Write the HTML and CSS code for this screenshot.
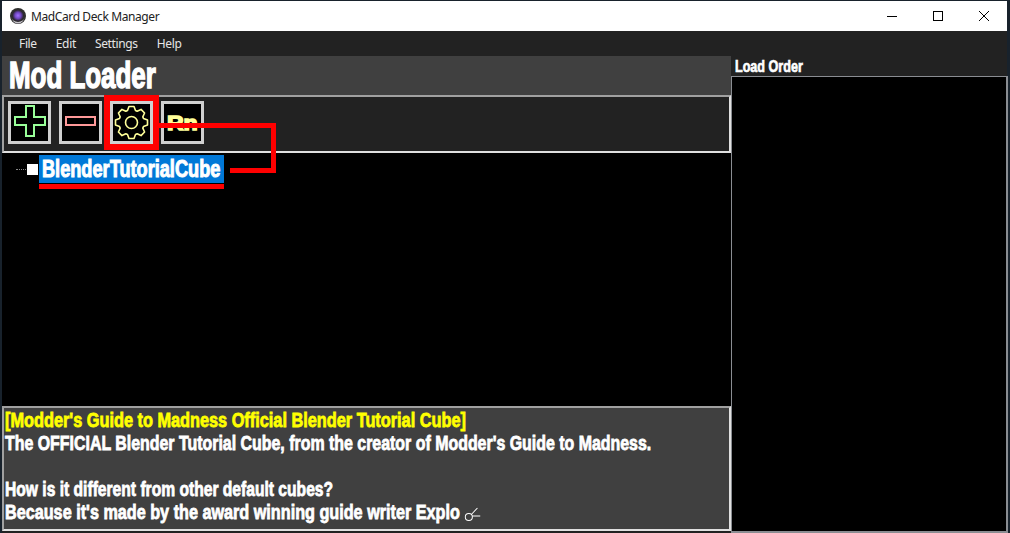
FILE: index.html
```html
<!DOCTYPE html>
<html lang="en">
<head>
  <meta charset="UTF-8">
  <title>MadCard Deck Manager</title>
  <link rel="stylesheet" href="styles.css">
</head>
<body>
  <div class="window">
    <!-- Title bar -->
    <div class="titlebar">
      <svg class="app-icon" width="16" height="16" viewBox="0 0 16 16">
        <defs>
          <radialGradient id="glow">
            <stop offset="0" stop-color="#a070ff"/>
            <stop offset="0.55" stop-color="#7048c0"/>
            <stop offset="1" stop-color="#2a2430"/>
          </radialGradient>
        </defs>
        <circle cx="8" cy="8" r="8" fill="#2e2e2e"/>
        <path d="M1.500 9a6.500 6.500 0 0 0 13 0 6.500 5 0 0 1-13 0z" fill="#c8c4cc"/>
        <circle cx="8" cy="7.500" r="5.500" fill="url(#glow)"/>
      </svg>
      <span class="app-title">MadCard Deck Manager</span>
      <div class="win-buttons">
        <svg width="46" height="30" viewBox="0 0 46 30"><path d="M18 15.500h10" stroke="#000" fill="none"/></svg>
        <svg width="46" height="30" viewBox="0 0 46 30"><rect x="18.500" y="10.500" width="9" height="9" stroke="#000" fill="none"/></svg>
        <svg width="46" height="30" viewBox="0 0 46 30"><path d="M18 10l10 10M28 10 18 20" stroke="#000" fill="none"/></svg>
      </div>
    </div>

    <!-- Menu -->
    <div class="menubar">
      <span>File</span>
      <span>Edit</span>
      <span>Settings</span>
      <span>Help</span>
    </div>

    <div class="main">
      <div class="left">
        <div class="header"><h1>Mod Loader</h1></div>

        <div class="toolbar">
          <button class="tool">
            <svg width="37" height="37" viewBox="0 0 37 37" shape-rendering="crispEdges"><path d="M15 2h8v11h11v8H23v11h-8V21H4v-8h11z" fill="none" stroke="#9f9" stroke-width="2"/></svg>
          </button>
          <button class="tool">
            <svg width="37" height="37" viewBox="0 0 37 37" shape-rendering="crispEdges"><rect x="4" y="13" width="29" height="8" fill="none" stroke="#f99" stroke-width="2"/></svg>
          </button>
          <button class="tool">
            <svg width="37" height="37" viewBox="-18.500 -18.500 37 37">
              <polygon points="-4,-12 -2.500,-16 2.500,-16 4,-12 5.660,-11.310 9.540,-13.080 13.080,-9.540 11.310,-5.660 12,-4 16,-2.500 16,2.500 12,4 11.310,5.660 13.080,9.540 9.540,13.080 5.660,11.310 4,12 2.500,16 -2.500,16 -4,12 -5.660,11.310 -9.540,13.080 -13.080,9.540 -11.310,5.660 -12,4 -16,2.500 -16,-2.500 -12,-4 -11.310,-5.660 -13.080,-9.540 -9.540,-13.080 -5.660,-11.310" fill="none" stroke="#ff9" stroke-width="1.600" stroke-linejoin="round"/>
              <circle r="6" fill="none" stroke="#ff9" stroke-width="1.600"/>
            </svg>
          </button>
          <button class="tool"><span class="rename">Rn</span></button>
        </div>

        <div class="tree">
          <div class="tree-row">
            <span class="tree-line"></span>
            <span class="tree-check"></span>
            <span class="tree-name"><span class="squeeze">BlenderTutorialCube</span></span>
          </div>
        </div>

        <div class="description">
          <p class="desc-title">[Modder's Guide to Madness Official Blender Tutorial Cube]</p>
          <p class="tight">The OFFICIAL Blender Tutorial Cube, from the creator of Modder's Guide to Madness.</p>
          <p>&nbsp;</p>
          <p class="tighter">How is it different from other default cubes?</p>
          <p>Because it's made by the award winning guide writer Explo <svg class="scissors" width="20" height="16" viewBox="0 0 16 16" preserveAspectRatio="none"><circle cx="4.500" cy="11" r="3.500" fill="none" stroke="#fff"/><path d="M7 8.500 13 2M8 10h8" stroke="#fff" fill="none"/></svg></p>
        </div>
      </div>

      <div class="right">
        <div class="load-label">Load Order</div>
        <div class="load-list"></div>
      </div>
    </div>

    <!-- Red marks drawn over the screenshot -->
    <div class="mark-box"></div>
    <div class="mark-underline"></div>
    <svg class="mark-line" width="117" height="50" viewBox="0 0 117 50"><path d="M0 2.500h114.500v45H71" fill="none" stroke="#f00" stroke-width="5"/></svg>
  </div>
</body>
</html>
```

FILE: styles.css
```css
html, body {
  margin: 0;
  padding: 0;
  overflow: hidden;
}

body {
  width: 1010px;
  height: 533px;
  background-color: #18222c;
  font-family: "Noto Sans", sans-serif;
}

.window {
  position: relative;
  width: 1005px;
  height: 532px;
  margin: 1px 0 0 2px;
  display: flex;
  flex-direction: column;
  background-color: #222;
}

.titlebar {
  height: 30px;
  flex: none;
  background-color: white;
  display: flex;
  align-items: center;
  color: #222;
  font-size: 12px;
  letter-spacing: -0.4px;
}

.app-icon {
  margin-left: 8px;
  margin-right: 5px;
}

.win-buttons {
  margin-left: auto;
  display: flex;
}

.menubar {
  height: 25px;
  flex: none;
  background-color: #222;
  color: #e6e6e6;
  display: flex;
  align-items: center;
  padding-left: 17px;
  gap: 19px;
  font-size: 12px;
  letter-spacing: -0.35px;
}

.main {
  flex: 1;
  display: flex;
  min-height: 0;
}

.left {
  width: 729px;
  flex: none;
  display: flex;
  flex-direction: column;
  padding-bottom: 2px;
  box-sizing: border-box;
}

.header {
  height: 39px;
  flex: none;
  background-color: #404040;
}

/* no Impact here, so bold Liberation squeezed sideways */
h1, .load-label, .squeeze, .description p, .rename {
  font-family: "Liberation Sans", sans-serif;
  font-weight: bold;
  white-space: nowrap;
  transform-origin: left center;
}

h1 {
  margin: 0 0 0 7px;
  font-size: 36px;
  line-height: 39px;
  color: white;
  transform: scaleX(0.72);
  -webkit-text-stroke: 1.500px white;
}

.toolbar {
  height: 58px;
  flex: none;
  box-sizing: border-box;
  background-color: #222;
  border: 2px solid #e0e0e0;
  border-top-color: #a0a0a0;
  border-left-color: #a0a0a0;
  display: flex;
  align-items: flex-start;
  padding: 4px 0 0 4px;
  gap: 8px;
}

.tool {
  width: 43px;
  height: 43px;
  padding: 0;
  box-sizing: border-box;
  background-color: black;
  border: 3px solid #d0d0d0;
  display: flex;
  align-items: center;
  justify-content: center;
}

.rename {
  display: block;
  margin-top: 2px;
  color: #ff9;
  font-size: 20px;
  transform: scaleX(1.15);
  transform-origin: center;
  -webkit-text-stroke: 1.500px #ff9;
}

.tree {
  flex: 1;
  background-color: black;
  padding-top: 2px;
}

.tree-row {
  display: flex;
  align-items: center;
  height: 28px;
  padding-left: 14px;
}

.tree-line {
  width: 10px;
  border-top: 1px dotted #888;
}

.tree-check {
  width: 11px;
  height: 11px;
  background-color: white;
  margin-left: 1px;
  margin-right: 1px;
}

.tree-name {
  width: 182px;
  height: 28px;
  padding-left: 3px;
  background-color: #0078d7;
  color: white;
}

.squeeze {
  display: block;
  font-size: 23px;
  line-height: 28px;
  transform: scaleX(0.79);
  -webkit-text-stroke: 1px white;
}

.description {
  height: 125px;
  flex: none;
  box-sizing: border-box;
  background-color: #404040;
  border: 2px solid #e0e0e0;
  border-top-color: #a0a0a0;
  border-left-color: #a0a0a0;
  padding-top: 1px;
  color: white;
}

.description p {
  margin: 0 0 0 1px;
  font-size: 20px;
  line-height: 23px;
  transform: scaleX(0.81);
  -webkit-text-stroke: 0.8px currentColor;
}

.description .desc-title {
  color: yellow;
  transform: scaleX(0.815);
}

.description .tight {
  transform: scaleX(0.796);
}

.description .tighter {
  transform: scaleX(0.781);
}

.scissors {
  vertical-align: -3px;
}

.right {
  flex: 1;
  display: flex;
  flex-direction: column;
}

.load-label {
  height: 20px;
  flex: none;
  color: white;
  font-size: 17px;
  line-height: 22px;
  margin-left: 4px;
  transform: scaleX(0.74);
  -webkit-text-stroke: 0.7px white;
}

.load-list {
  flex: 1;
  background-color: black;
  border: solid #8a8d92;
  border-width: 1px 2px 2px 1px;
  margin-right: -1px;
}

.mark-box {
  position: absolute;
  left: 102px;
  top: 94px;
  width: 43px;
  height: 43px;
  border: 6px solid #f00;
}

.mark-underline {
  position: absolute;
  left: 37px;
  top: 183px;
  width: 185px;
  height: 5px;
  background-color: #f00;
}

.mark-line {
  position: absolute;
  left: 157px;
  top: 122px;
}
```
